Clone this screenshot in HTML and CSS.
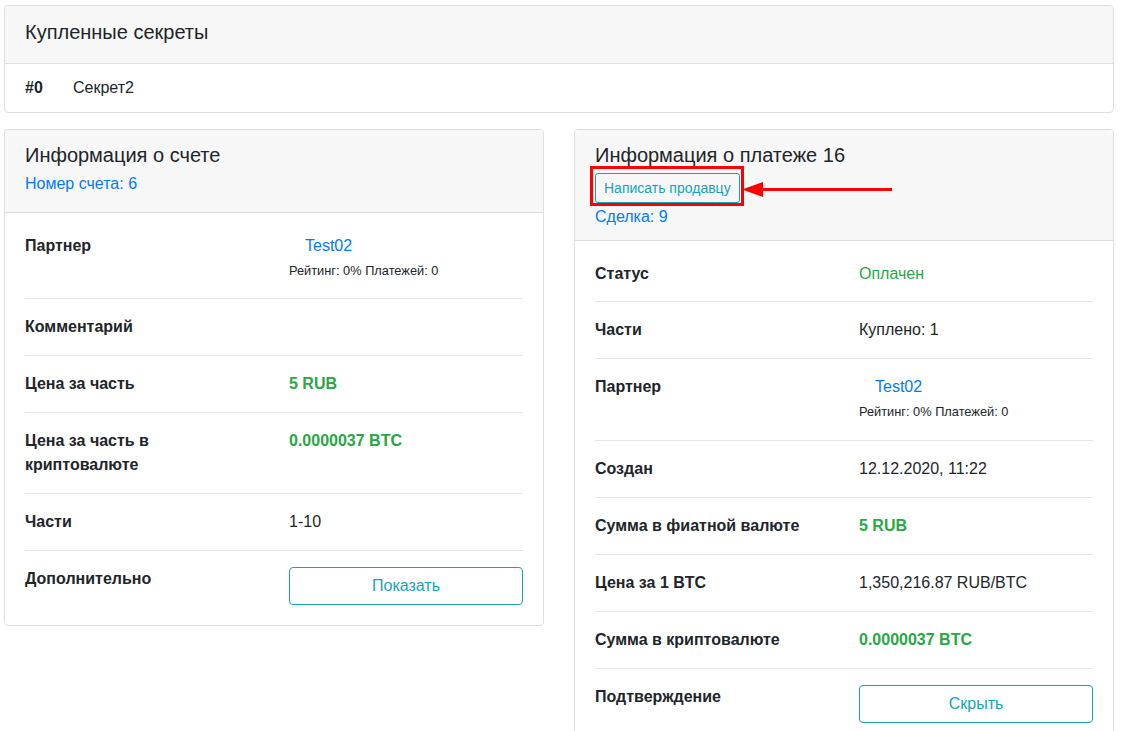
FILE: index.html
```html
<!DOCTYPE html>
<html lang="ru">
<head>
<meta charset="utf-8">
<title>Информация о платеже</title>
<link rel="stylesheet" href="styles.css">
</head>
<body>
<div class="page">
  <section class="card">
    <header class="card-header hdr-top">
      <h5 class="card-title">Купленные секреты</h5>
    </header>
    <div class="card-body secrets">
      <span class="secret-num">#0</span>
      <span class="secret-name">Секрет2</span>
    </div>
  </section>

  <div class="columns">
    <section class="card">
      <header class="card-header hdr-left">
        <h5 class="card-title">Информация о счете</h5>
        <a class="link sub-left" href="#">Номер счета: 6</a>
      </header>
      <div class="card-body info">
        <div class="info-row">
          <div class="label">Партнер</div>
          <div class="value">
            <a class="link partner" href="#">Test02</a>
            <div class="rating"><small>Рейтинг: 0% Платежей: 0</small></div>
          </div>
        </div>
        <div class="info-row">
          <div class="label">Комментарий</div>
          <div class="value"></div>
        </div>
        <div class="info-row">
          <div class="label">Цена за часть</div>
          <div class="value money">5 RUB</div>
        </div>
        <div class="info-row">
          <div class="label">Цена за часть в криптовалюте</div>
          <div class="value money">0.0000037 BTC</div>
        </div>
        <div class="info-row">
          <div class="label">Части</div>
          <div class="value">1-10</div>
        </div>
        <div class="info-row">
          <div class="label">Дополнительно</div>
          <div class="value"><button class="btn-outline">Показать</button></div>
        </div>
      </div>
    </section>

    <section class="card">
      <header class="card-header hdr-right">
        <h5 class="card-title">Информация о платеже 16</h5>
        <div class="action">
          <span class="annot">
            <button class="btn-outline btn-sm">Написать продавцу</button>
            <span class="annot-box"></span>
            <svg class="annot-arrow" width="152" height="17" viewBox="0 0 152 17">
              <polygon points="0,8.5 21,1 21,16" fill="#ff0000"/>
              <rect x="20" y="7" width="130" height="3" fill="#ff0000"/>
            </svg>
          </span>
        </div>
        <a class="link deal" href="#">Сделка: 9</a>
      </header>
      <div class="card-body info">
        <div class="info-row">
          <div class="label">Статус</div>
          <div class="value status">Оплачен</div>
        </div>
        <div class="info-row">
          <div class="label">Части</div>
          <div class="value">Куплено: 1</div>
        </div>
        <div class="info-row">
          <div class="label">Партнер</div>
          <div class="value">
            <a class="link partner" href="#">Test02</a>
            <div class="rating"><small>Рейтинг: 0% Платежей: 0</small></div>
          </div>
        </div>
        <div class="info-row">
          <div class="label">Создан</div>
          <div class="value">12.12.2020, 11:22</div>
        </div>
        <div class="info-row">
          <div class="label">Сумма в фиатной валюте</div>
          <div class="value money">5 RUB</div>
        </div>
        <div class="info-row">
          <div class="label">Цена за 1 BTC</div>
          <div class="value">1,350,216.87 RUB/BTC</div>
        </div>
        <div class="info-row">
          <div class="label">Сумма в криптовалюте</div>
          <div class="value money">0.0000037 BTC</div>
        </div>
        <div class="info-row">
          <div class="label">Подтверждение</div>
          <div class="value"><button class="btn-outline">Скрыть</button></div>
        </div>
      </div>
    </section>
  </div>
</div>
</body>
</html>
```

FILE: styles.css
```css
* { box-sizing: border-box; }

html, body {
  margin: 0;
  padding: 0;
  background: #ffffff;
}

body {
  font-family: "Liberation Sans", Arial, sans-serif;
  font-size: 16px;
  line-height: 24px;
  color: #212529;
}

.page {
  width: 1114px;
  padding: 5px 0 0 4px;
}

.columns {
  display: grid;
  grid-template-columns: 540px 540px;
  column-gap: 30px;
  align-items: start;
  margin-top: 16px;
}

.card {
  background: #ffffff;
  border: 1px solid #dfdfdf;
  border-radius: 4px;
  overflow: visible;
}

.card-header {
  background: #f7f7f7;
  border-bottom: 1px solid #dfdfdf;
  padding: 13px 20px 18px;
  border-radius: 3px 3px 0 0;
}

.card-title {
  margin: 0;
  font-size: 20px;
  line-height: 24px;
  font-weight: 400;
  color: #212529;
}

.hdr-top {
  padding-top: 14px;
  padding-bottom: 19px;
}

.hdr-left { padding-bottom: 16px; }

.sub-left {
  display: block;
  margin-top: 5px;
}

.hdr-right { padding-bottom: 11px; }

.link {
  color: #007bff;
  text-decoration: none;
}

.deal {
  display: block;
  margin-top: 2px;
}

.action {
  margin-top: 6px;
  display: flex;
}

.annot {
  position: relative;
  display: inline-block;
}

.annot-box {
  position: absolute;
  top: -7px;
  right: -4px;
  bottom: -3px;
  left: -5px;
  border: 3px solid #ff0000;
  pointer-events: none;
}

.annot-arrow {
  position: absolute;
  left: 147px;
  top: 8px;
  display: block;
}

.card-body {
  padding: 20px;
}

.info {
  padding-top: 21px;
}

.secrets {
  padding: 12px 20px;
  display: flex;
}

.secret-num {
  font-weight: 700;
  width: 48px;
}

.info-row {
  display: grid;
  grid-template-columns: 234px 234px;
  column-gap: 30px;
  padding: 16px 0;
  border-top: 1px solid #e6e6e6;
}

.info-row:first-child {
  padding-top: 0;
  padding-bottom: 15px;
  border-top: 0;
}

.info-row:last-child {
  padding-bottom: 0;
}

.label {
  font-weight: 700;
}

.value {
  min-height: 24px;
}

.money {
  color: #28a745;
  font-weight: 700;
}

.status {
  color: #28a745;
}

.partner {
  display: inline-block;
  padding-left: 16px;
}

.rating small {
  font-size: 12.8px;
}

.btn-outline {
  display: block;
  width: 100%;
  height: 38px;
  font-family: "Liberation Sans", Arial, sans-serif;
  font-size: 16px;
  line-height: 24px;
  color: #17a2b8;
  background: transparent;
  border: 1px solid #17a2b8;
  border-radius: 4px;
  padding: 6px 12px;
  text-align: center;
  cursor: pointer;
}

.btn-sm {
  width: auto;
  height: 30px;
  font-size: 14px;
  line-height: 20px;
  padding: 4px 8px;
  border-radius: 3px;
}
```
